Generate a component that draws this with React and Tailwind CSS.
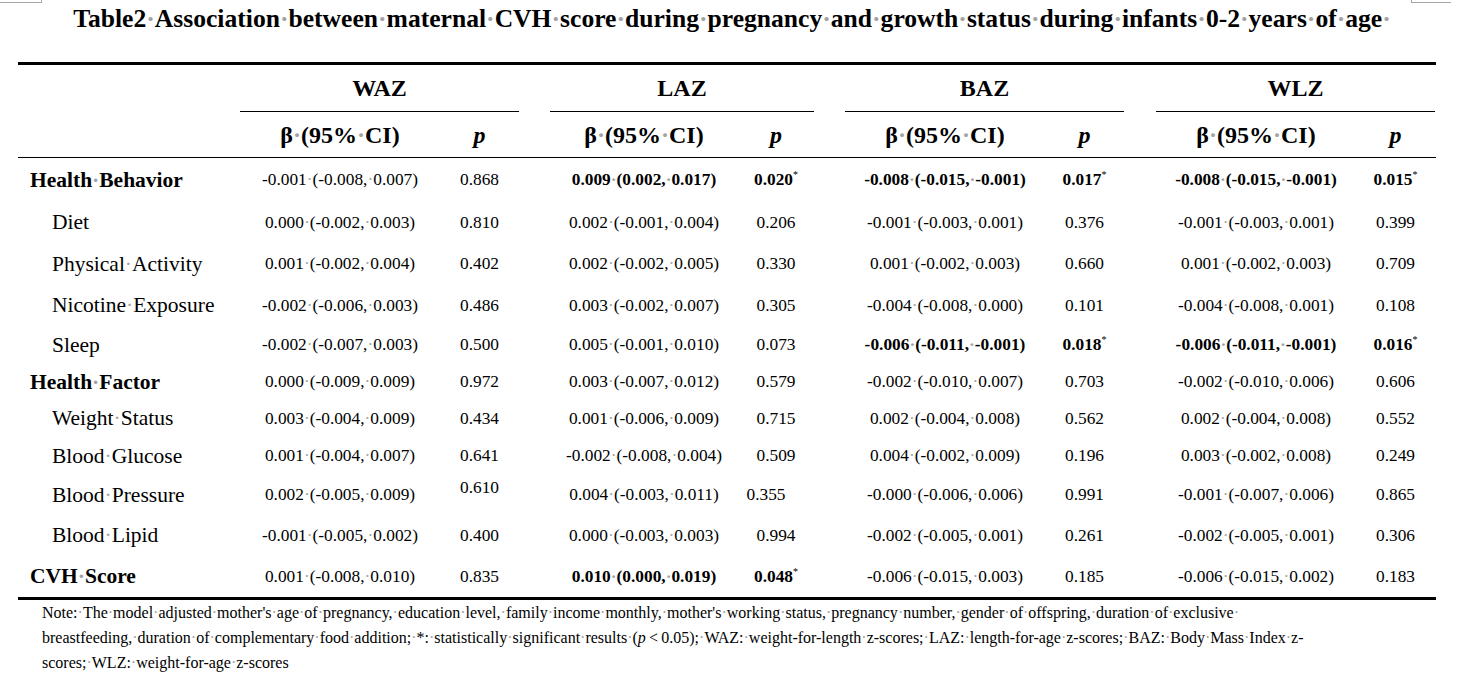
import React from 'react';

const COLS = "grid grid-cols-[222px_200px_79px_31px_188px_76px_31px_200px_79px_32px_200px_79px]";

// word-style space marks
const Dots = ({ text }) => {
  const parts = text.split(' ');
  return parts.map((w, i) =>
    i === 0 ? <React.Fragment key={i}>{w}</React.Fragment> : (
      <React.Fragment key={i}>
        <span className="text-[#a3a3a3]">·</span>{w}
      </React.Fragment>
    )
  );
};

const rows = [
  { label: 'Health Behavior', top: true, h: 'h-[44px]', cells: [
    ['-0.001 (-0.008, 0.007)', '0.868'],
    ['0.009 (0.002, 0.017)', '0.020', true],
    ['-0.008 (-0.015, -0.001)', '0.017', true],
    ['-0.008 (-0.015, -0.001)', '0.015', true],
  ]},
  { label: 'Diet', h: 'h-[41px]', cells: [
    ['0.000 (-0.002, 0.003)', '0.810'],
    ['0.002 (-0.001, 0.004)', '0.206'],
    ['-0.001 (-0.003, 0.001)', '0.376'],
    ['-0.001 (-0.003, 0.001)', '0.399'],
  ]},
  { label: 'Physical Activity', h: 'h-[42px]', cells: [
    ['0.001 (-0.002, 0.004)', '0.402'],
    ['0.002 (-0.002, 0.005)', '0.330'],
    ['0.001 (-0.002, 0.003)', '0.660'],
    ['0.001 (-0.002, 0.003)', '0.709'],
  ]},
  { label: 'Nicotine Exposure', h: 'h-[41px]', cells: [
    ['-0.002 (-0.006, 0.003)', '0.486'],
    ['0.003 (-0.002, 0.007)', '0.305'],
    ['-0.004 (-0.008, 0.000)', '0.101'],
    ['-0.004 (-0.008, 0.001)', '0.108'],
  ]},
  { label: 'Sleep', h: 'h-[38px]', cells: [
    ['-0.002 (-0.007, 0.003)', '0.500'],
    ['0.005 (-0.001, 0.010)', '0.073'],
    ['-0.006 (-0.011, -0.001)', '0.018', true],
    ['-0.006 (-0.011, -0.001)', '0.016', true],
  ]},
  { label: 'Health Factor', top: true, h: 'h-[36px]', cells: [
    ['0.000 (-0.009, 0.009)', '0.972'],
    ['0.003 (-0.007, 0.012)', '0.579'],
    ['-0.002 (-0.010, 0.007)', '0.703'],
    ['-0.002 (-0.010, 0.006)', '0.606'],
  ]},
  { label: 'Weight Status', h: 'h-[37px]', cells: [
    ['0.003 (-0.004, 0.009)', '0.434'],
    ['0.001 (-0.006, 0.009)', '0.715'],
    ['0.002 (-0.004, 0.008)', '0.562'],
    ['0.002 (-0.004, 0.008)', '0.552'],
  ]},
  { label: 'Blood Glucose', h: 'h-[38px]', cells: [
    ['0.001 (-0.004, 0.007)', '0.641'],
    ['-0.002 (-0.008, 0.004)', '0.509'],
    ['0.004 (-0.002, 0.009)', '0.196'],
    ['0.003 (-0.002, 0.008)', '0.249'],
  ]},
  { label: 'Blood Pressure', h: 'h-[40px]', odd: true, cells: [
    ['0.002 (-0.005, 0.009)', '0.610'],
    ['0.004 (-0.003, 0.011)', '0.355'],
    ['-0.000 (-0.006, 0.006)', '0.991'],
    ['-0.001 (-0.007, 0.006)', '0.865'],
  ]},
  { label: 'Blood Lipid', h: 'h-[41px]', cells: [
    ['-0.001 (-0.005, 0.002)', '0.400'],
    ['0.000 (-0.003, 0.003)', '0.994'],
    ['-0.002 (-0.005, 0.001)', '0.261'],
    ['-0.002 (-0.005, 0.001)', '0.306'],
  ]},
  { label: 'CVH Score', top: true, h: 'h-[41px]', cells: [
    ['0.001 (-0.008, 0.010)', '0.835'],
    ['0.010 (0.000, 0.019)', '0.048', true],
    ['-0.006 (-0.015, 0.003)', '0.185'],
    ['-0.006 (-0.015, 0.002)', '0.183'],
  ]},
];

const groups = ['WAZ', 'LAZ', 'BAZ', 'WLZ'];

const PVal = ({ v, sig }) => (
  <span className={sig ? 'font-bold' : ''}>
    {v}
    {sig && <span className="align-super text-[10px] font-normal leading-none">*</span>}
  </span>
);

const DataRow = ({ row }) => (
  <div className={`${COLS} ${row.h} text-[17.33px]`}>
    <div className={`flex items-center text-[21.5px] ${row.top ? 'pl-[12px] font-bold' : 'pl-[34px]'}`}>
      <Dots text={row.label} />
    </div>
    {row.cells.map(([ci, p, sig], gi) => (
      <React.Fragment key={gi}>
        <div className={`flex items-center justify-center ${sig ? 'font-bold' : ''}`}>
          <Dots text={ci} />
        </div>
        <div
          className={`flex justify-center ${
            row.odd && gi === 0 ? 'items-start' : 'items-center'
          } ${row.odd && gi === 1 ? 'pr-[20px]' : ''}`}
        >
          <PVal v={p} sig={sig} />
        </div>
        {gi < 3 && <div />}
      </React.Fragment>
    ))}
  </div>
);

export default function App() {
  return (
    <div className="relative w-[1464px] h-[681px] bg-white text-black overflow-hidden [font-family:'Liberation_Serif','Times_New_Roman',serif]">
      {/* page corner marks */}
      <div className="absolute left-0 top-0 w-[42px] h-[3px] border-b border-r border-[#a8a8a8]" />
      <div className="absolute left-[1411px] top-0 w-[40px] h-[3px] border-b border-l border-[#a8a8a8]" />

      <div className="h-[62px] pt-[6px] text-center text-[25.6px] leading-[25px] font-bold">
        <Dots text="Table2 Association between maternal CVH score during pregnancy and growth status during infants 0-2 years of age " />
      </div>

      <div className="ml-[18px] w-[1418px] border-t-[3px] border-b-[3px] border-black">
        <div className={`${COLS} h-[47px] text-[24px] font-bold`}>
          <div />
          {groups.map((g, i) => (
            <React.Fragment key={g}>
              <div className="col-span-2 flex items-center justify-center border-b border-black">{g}</div>
              {i < 3 && <div />}
            </React.Fragment>
          ))}
        </div>
        <div className={`${COLS} h-[46px] text-[24px] font-bold border-b border-black`}>
          <div />
          {groups.map((g, i) => (
            <React.Fragment key={g}>
              <div className="flex items-center justify-center">
                <Dots text="β (95% CI)" />
              </div>
              <div className="flex items-center justify-center italic">p</div>
              {i < 3 && <div />}
            </React.Fragment>
          ))}
        </div>
        {rows.map((r) => (
          <DataRow key={r.label} row={r} />
        ))}
      </div>

      <div className="ml-[18px] pl-[24px] text-[16px] leading-[25px] whitespace-nowrap">
        <div><Dots text="Note: The model adjusted mother's age of pregnancy, education level, family income monthly, mother's working status, pregnancy number, gender of offspring, duration of exclusive " /></div>
        <div>
          <Dots text="breastfeeding, duration of complementary food addition; *: statistically significant results (" />
          <i>p</i>{'\u2009<\u2009'}
          <Dots text="0.05); WAZ: weight-for-length z-scores; LAZ: length-for-age z-scores; BAZ: Body Mass Index z-" />
        </div>
        <div><Dots text="scores; WLZ: weight-for-age z-scores" /></div>
      </div>
    </div>
  );
}
